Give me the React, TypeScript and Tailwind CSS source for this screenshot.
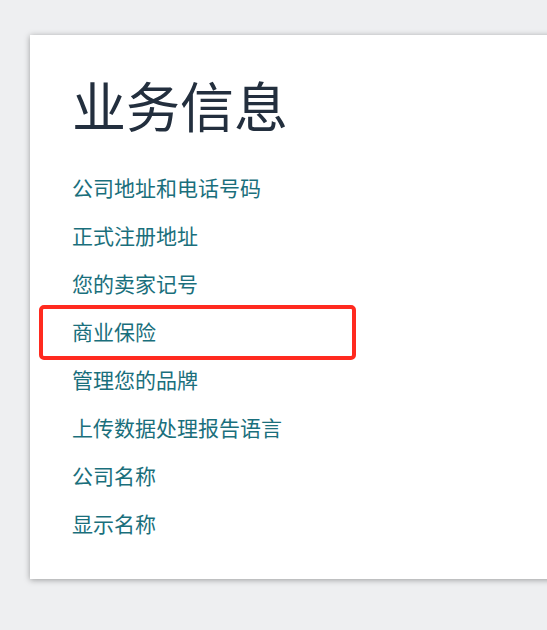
import React from "react";

const links = [
  "公司地址和电话号码",
  "正式注册地址",
  "您的卖家记号",
  "商业保险",
  "管理您的品牌",
  "上传数据处理报告语言",
  "公司名称",
  "显示名称",
];

export default function App() {
  return (
    <div
      className="min-h-[630px] w-[547px] overflow-hidden bg-[#eeeff1] pt-[35px] pl-[30px]"
      style={{ fontFamily: '"Noto Sans CJK SC", "Noto Sans", sans-serif' }}
    >
      <div className="relative h-[544px] w-[560px] bg-white pl-[42px] pt-[38px] shadow-[0_1px_6px_rgba(0,0,0,0.35)]">
        <h1 className="text-[54px] leading-[64px] font-normal text-[#232f3e]">业务信息</h1>
        <ul className="mt-[34px] flex flex-col">
          {links.map((l) => (
            <li key={l} className="h-[48px] text-[21px] leading-[32px] font-normal text-[#1a6f7c]">
              {l}
            </li>
          ))}
        </ul>
        <div className="absolute left-[9px] top-[270px] h-[55px] w-[317px] rounded-[5px] border-[4px] border-[#ff2a1f]" />
      </div>
    </div>
  );
}
